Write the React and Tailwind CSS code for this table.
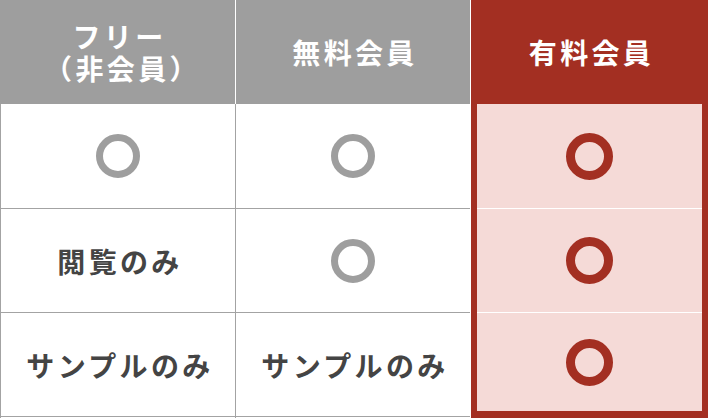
const font = "font-['Noto_Sans_CJK_JP','Noto_Sans',sans-serif] font-bold";

function GreyCircle() {
  return <div className="w-[44px] h-[44px] rounded-full border-[7px] border-[#9e9e9e]" />;
}

function RedCircle() {
  return <div className="w-[47px] h-[47px] rounded-full border-[9px] border-[#a32f22]" />;
}

function Label({ children }) {
  return (
    <span className={`${font} text-[28px] tracking-[0.12em] pl-[4px] text-[#444] leading-none`}>
      {children}
    </span>
  );
}

function HeadText({ children }) {
  return (
    <div className={`${font} text-[28px] tracking-[0.12em] pl-[4px] text-white text-center leading-[32px]`}>
      {children}
    </div>
  );
}

export default function App() {
  const cell = "flex items-center justify-center border-b border-[#a3a3a3]";

  return (
    <div className="w-[708px] h-[418px] bg-white flex">

      {/* free */}
      <div className="w-[235px] flex flex-col">
        <div className="h-[104px] bg-[#9e9e9e] flex items-center justify-center">
          <HeadText>
            フリー
            <br />
            <span className="ml-[6px]">（非会員）</span>
          </HeadText>
        </div>
        <div className="flex-1 flex flex-col border-l border-[#a3a3a3]">
          <div className={`${cell} h-[105px]`}>
            <GreyCircle />
          </div>
          <div className={`${cell} h-[104px]`}>
            <Label>閲覧のみ</Label>
          </div>
          <div className={`${cell} h-[104px]`}>
            <Label>サンプルのみ</Label>
          </div>
        </div>
      </div>

      {/* free member */}
      <div className="w-[235px] flex flex-col">
        <div className="h-[104px] bg-[#9e9e9e] border-l border-white flex items-center justify-center">
          <HeadText>無料会員</HeadText>
        </div>
        <div className="flex-1 flex flex-col border-l border-[#a3a3a3]">
          <div className={`${cell} h-[105px]`}>
            <GreyCircle />
          </div>
          <div className={`${cell} h-[104px]`}>
            <GreyCircle />
          </div>
          <div className={`${cell} h-[104px]`}>
            <Label>サンプルのみ</Label>
          </div>
        </div>
      </div>

      {/* paid member */}
      <div className="w-[238px] pl-px flex flex-col">
        <div className="flex-1 flex flex-col bg-[#a32f22]">
          <div className="h-[104px] flex items-center justify-center">
            <HeadText>有料会員</HeadText>
          </div>
          <div className="flex-1 mx-[6px] mb-[7px] flex flex-col divide-y divide-white bg-[#f5dad7]">
            <div className="h-[105px] flex items-center justify-center">
              <RedCircle />
            </div>
            <div className="h-[104px] flex items-center justify-center">
              <RedCircle />
            </div>
            <div className="flex-1 flex items-center justify-center">
              <RedCircle />
            </div>
          </div>
        </div>
      </div>

    </div>
  );
}
